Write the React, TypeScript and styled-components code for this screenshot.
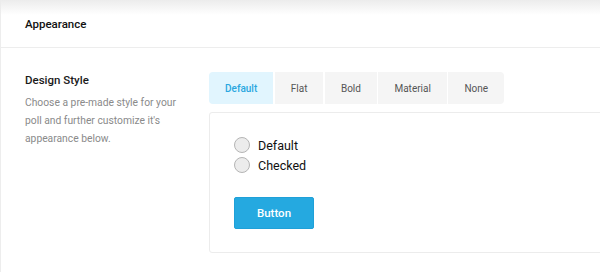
import { FunctionComponent, useState } from "react";
import styled, { createGlobalStyle } from "styled-components";

const Global = createGlobalStyle`
  html, body {
    margin: 0;
    padding: 0;
    background: #fff;
    font-family: Roboto, "Liberation Sans", sans-serif;
    -webkit-font-smoothing: antialiased;
  }
`;

const Page = styled.div`
  width: 600px;
  height: 272px;
  overflow: hidden;
  background: #fff;
`;

const Panel = styled.section`
  position: relative;
  width: 640px;
  height: 100%;
  background: #fff;
  border-left: 1px solid #ededed;
  box-sizing: border-box;

  /* shadow cast by the bar above */
  &::before {
    content: "";
    position: absolute;
    top: 0;
    left: -1px;
    right: 0;
    height: 15px;
    background: linear-gradient(#ececec, rgba(255, 255, 255, 0));
    pointer-events: none;
  }
`;

const Header = styled.header`
  height: 47px;
  display: flex;
  align-items: center;
  padding: 0 24px;
  border-bottom: 1px solid #ededed;
`;

const Title = styled.h2`
  margin: 0;
  font-size: 11.5px;
  font-weight: 500;
  color: #111;
`;

const Row = styled.div`
  display: flex;
  padding: 24px 0 0 24px;
`;

const Info = styled.div`
  width: 184px;
  flex-shrink: 0;
`;

const Label = styled.h3`
  margin: 0;
  font-size: 11.5px;
  font-weight: 500;
  color: #1a1a1a;
  line-height: 16px;
`;

const Hint = styled.p`
  width: 152px;
  margin: 6px 0 0;
  font-size: 10.3px;
  line-height: 18px;
  color: #8a8a8a;
`;

const Control = styled.div`
  flex: 1;
`;

const Tabs = styled.div`
  display: inline-flex;
  gap: 1.5px;
  border-radius: 4px;
  overflow: hidden;
`;

const Tab = styled.button<{ $active?: boolean }>`
  height: 32px;
  padding: 0 16px;
  border: 0;
  font-family: inherit;
  font-size: 10px;
  font-weight: ${(p) => (p.$active ? 500 : 400)};
  cursor: pointer;
  background: ${(p) => (p.$active ? "#e1f5fe" : "#f5f5f5")};
  color: ${(p) => (p.$active ? "#2aa7e0" : "#555")};
`;

const Preview = styled.div`
  margin-top: 8px;
  height: 141px;
  border: 1px solid #ececec;
  border-radius: 3px;
  box-sizing: border-box;
  padding: 24px;
`;

const Choices = styled.div`
  display: flex;
  flex-direction: column;
  gap: 4px;
`;

const Choice = styled.label`
  display: flex;
  align-items: center;
  gap: 8px;
  height: 16px;
  font-size: 12.5px;
  color: #111;
`;

const Radio = styled.span`
  width: 16px;
  height: 16px;
  box-sizing: border-box;
  border-radius: 50%;
  border: 1px solid #b5b5b5;
  background: #ececec;
`;

const Button = styled.button`
  display: block;
  margin-top: 24px;
  width: 80px;
  height: 32px;
  border: 1px solid #1fa0d8;
  border-radius: 2px;
  background: #25a9e0;
  color: #fff;
  font-family: inherit;
  font-size: 11.5px;
  font-weight: 500;
`;

const styles = ["Default", "Flat", "Bold", "Material", "None"];

const App: FunctionComponent = () => {
  const [active, setActive] = useState("Default");
  return <>
    <Global/>
    <Page>
      <Panel>
        <Header>
          <Title>Appearance</Title>
        </Header>
        <Row>
          <Info>
            <Label>Design Style</Label>
            <Hint>Choose a pre-made style for your poll and further customize it's appearance below.</Hint>
          </Info>
          <Control>
            <Tabs>
              {styles.map((s) => (
                <Tab key={s} $active={s === active} onClick={() => setActive(s)}>{s}</Tab>
              ))}
            </Tabs>
            <Preview>
              <Choices>
                <Choice><Radio/>Default</Choice>
                <Choice><Radio/>Checked</Choice>
              </Choices>
              <Button>Button</Button>
            </Preview>
          </Control>
        </Row>
      </Panel>
    </Page>
  </>;
};

export default App;
